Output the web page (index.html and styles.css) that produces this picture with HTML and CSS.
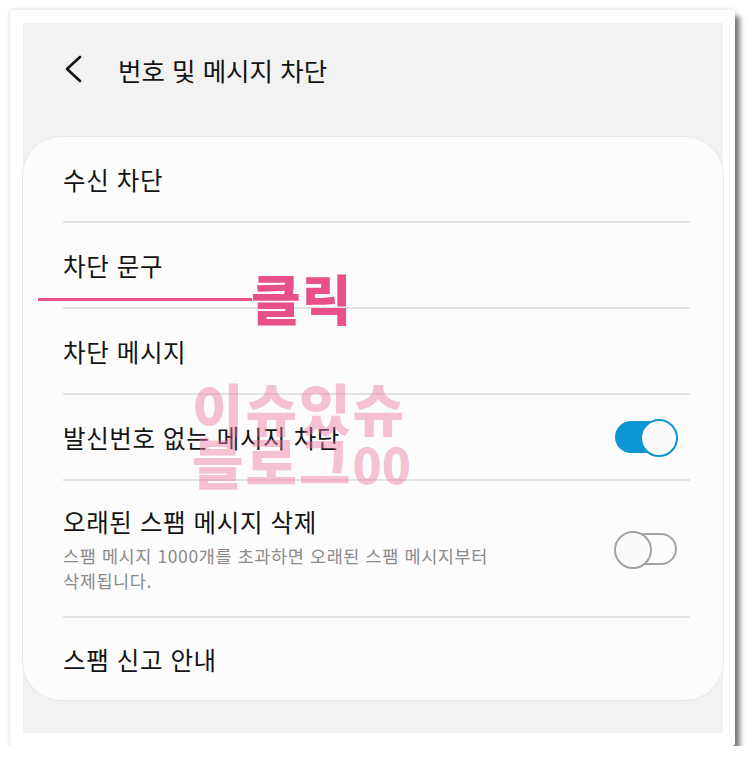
FILE: index.html
```html
<!DOCTYPE html>
<html lang="ko">
<head>
    <meta charset="UTF-8">
    <title>번호 및 메시지 차단</title>
    <link rel="stylesheet" href="styles.css">
</head>
<body>
<div class="frame">
    <div class="screen">
        <div class="header">
            <svg class="back" width="20" height="28" viewBox="0 0 20 28"><path d="M17 2 L4 14 L17 26" fill="none" stroke="#111" stroke-width="2.6" stroke-linecap="round" stroke-linejoin="round"/></svg>
            <span class="title">번호 및 메시지 차단</span>
        </div>
        <div class="card">
            <div class="row"><span class="label">수신 차단</span></div>
            <div class="row"><span class="label">차단 문구</span></div>
            <div class="row"><span class="label">차단 메시지</span></div>
            <div class="row">
                <span class="label">발신번호 없는 메시지 차단</span>
                <span class="switch on"><i></i></span>
            </div>
            <div class="row tall">
                <div class="texts">
                    <span class="label">오래된 스팸 메시지 삭제</span>
                    <span class="sub">스팸 메시지 1000개를 초과하면 오래된 스팸 메시지부터<br>삭제됩니다.</span>
                </div>
                <span class="switch"><i></i></span>
            </div>
            <div class="row last"><span class="label">스팸 신고 안내</span></div>
        </div>
    </div>
    <div class="mark-line"></div>
    <div class="mark-click">클릭</div>
    <div class="watermark">이슈있슈<br>블로그<span class="num">00</span></div>
</div>
</body>
</html>
```

FILE: styles.css
```css
*{margin: 0;padding: 0;box-sizing: border-box;}
body{
    font-family: "Noto Sans CJK KR", "Noto Sans", sans-serif;
    background: #fff;
}
.frame{
    position: relative;
    margin: 10px 0 0 10px;
    width: 725px;
    height: 736px;
    padding: 13px;
    background: #fff;
    border-radius: 3px;
    box-shadow: 5px 6px 5px rgba(0,0,0,0.5), 0 0 4px rgba(0,0,0,0.18);
}
.screen{
    width: 700px;
    height: 710px;
    background: #f2f2f2;
}
.header{
    height: 114px;
    display: flex;
    align-items: center;
    padding: 0 0 22px 40px;
}
.back{
    margin-right: 35px;
}
.title{
    font-size: 25.5px;
    color: #141414;
}
.card{
    height: 563px;
    background: #fcfcfc;
    border-radius: 38px;
    box-shadow: 0 0 0 1px #e9e9e9;
    padding: 0 33px 0 40px;
}
.row{
    height: 86px;
    display: flex;
    align-items: center;
    justify-content: space-between;
    border-bottom: 2px solid #e3e3e3;
}
.row.tall{
    height: 137px;
}
.row.last{
    border-bottom: none;
    height: 83px;
}
.label{
    font-size: 24.5px;
    color: #141414;
    letter-spacing: 0.6px;
}
.texts{
    display: flex;
    flex-direction: column;
}
.sub{
    font-size: 17.5px;
    color: #8a8a8a;
    line-height: 25px;
    margin-top: 4px;
    letter-spacing: 0.6px;
}
.switch{
    position: relative;
    width: 62px;
    height: 32px;
    border-radius: 16px;
    border: 2px solid #a3a3a3;
    margin-right: 13px;
}
.switch i{
    position: absolute;
    top: -4px;
    left: -3px;
    width: 38px;
    height: 38px;
    border-radius: 50%;
    border: 2px solid #a3a3a3;
    background: #fafafa;
}
.switch.on{
    background: #0a96d2;
    border-color: #0a96d2;
}
.switch.on i{
    left: auto;
    right: -3px;
    border-color: #0a96d2;
}
.mark-line{
    position: absolute;
    left: 28px;
    top: 288px;
    width: 214px;
    height: 3px;
    background: #e8508a;
}
.mark-click{
    position: absolute;
    left: 241px;
    top: 258px;
    font-size: 54px;
    font-weight: 900;
    line-height: 60px;
    color: #e8508a;
    letter-spacing: 1px;
}
.watermark{
    position: absolute;
    left: 182px;
    top: 370px;
    font-size: 56px;
    font-weight: 900;
    line-height: 53px;
    color: rgba(236,120,160,0.45);
    letter-spacing: 2px;
    pointer-events: none;
}
.watermark .num{
    font-size: 48px;
    letter-spacing: 0;
}
```
